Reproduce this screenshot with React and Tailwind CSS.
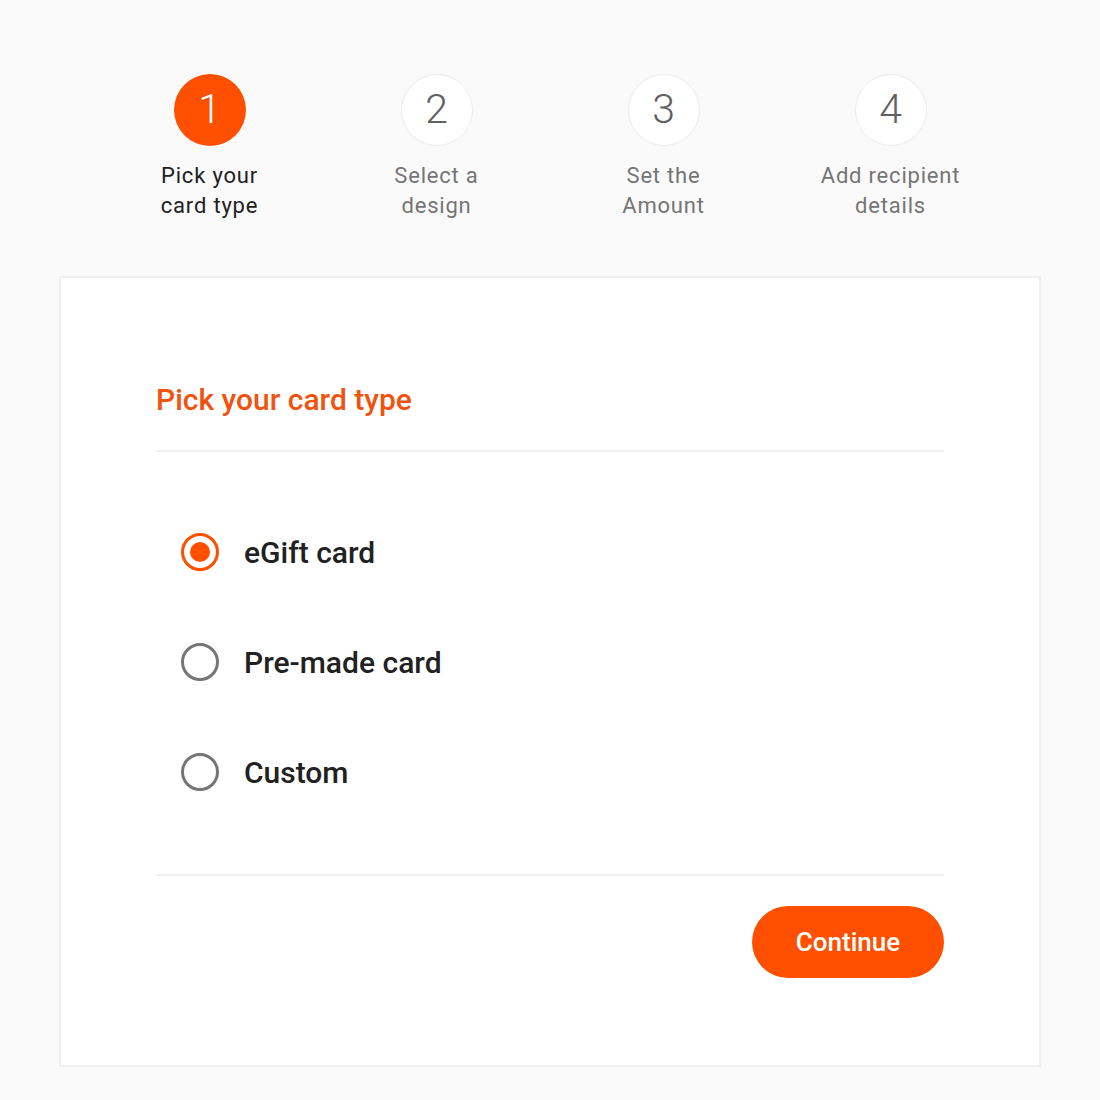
export default function App() {
  const steps = [
    { n: 1, label: ["Pick your", "card type"], active: true },
    { n: 2, label: ["Select a", "design"] },
    { n: 3, label: ["Set the", "Amount"] },
    { n: 4, label: ["Add recipient", "details"] },
  ]

  const options = [
    { name: "eGift card", checked: true },
    { name: "Pre-made card" },
    { name: "Custom" },
  ]

  return (
    <div className="min-h-[1100px] bg-[#fafafa] pt-[74px] font-['Roboto',sans-serif]">
      {/* Stepper */}
      <div className="mx-auto grid w-[908px] grid-cols-4">
        {steps.map((step) => (
          <div key={step.n} className="flex flex-col items-center">
            <div
              className={
                step.active
                  ? "flex h-[72px] w-[72px] items-center justify-center rounded-full bg-[#fe5000] text-[41px] font-light text-white"
                  : "flex h-[72px] w-[72px] items-center justify-center rounded-full border border-[#ececec] bg-white text-[41px] font-light text-[#616161]"
              }
            >
              {step.n}
            </div>
            <div
              className={
                step.active
                  ? "mt-[15px] text-center text-[22px] leading-[30px] tracking-[0.8px] text-[#212121]"
                  : "mt-[15px] text-center text-[22px] leading-[30px] tracking-[0.8px] text-[#757575]"
              }
            >
              {step.label[0]}
              <br />
              {step.label[1]}
            </div>
          </div>
        ))}
      </div>

      {/* Card */}
      <div className="mx-auto mt-[55px] w-[982px] border-2 border-[#efefef] bg-white px-[95px] pb-[87px] pt-[104px]">
        <h2 className="text-[30px] font-medium leading-[36px] text-[#f0530f]">Pick your card type</h2>
        <div className="mt-[32px] h-[2px] bg-[#efefef]" />

        <div className="flex flex-col gap-[72px] pb-[83px] pl-[25px] pt-[81px]">
          {options.map((opt) => (
            <label key={opt.name} className="flex h-[38px] items-center gap-[25px]">
              <span
                className={
                  opt.checked
                    ? "flex h-[38px] w-[38px] items-center justify-center rounded-full border-[3px] border-[#fe5000]"
                    : "flex h-[38px] w-[38px] items-center justify-center rounded-full border-[3px] border-[#757575]"
                }
              >
                {opt.checked && <span className="h-[20px] w-[20px] rounded-full bg-[#fe5000]" />}
              </span>
              <span className="text-[30px] font-medium text-[#212121]">{opt.name}</span>
            </label>
          ))}
        </div>

        <div className="h-[2px] bg-[#efefef]" />
        <div className="mt-[30px] flex justify-end">
          <button className="h-[72px] w-[192px] rounded-full bg-[#fe5000] text-[26px] font-medium text-white">
            Continue
          </button>
        </div>
      </div>
    </div>
  )
}
